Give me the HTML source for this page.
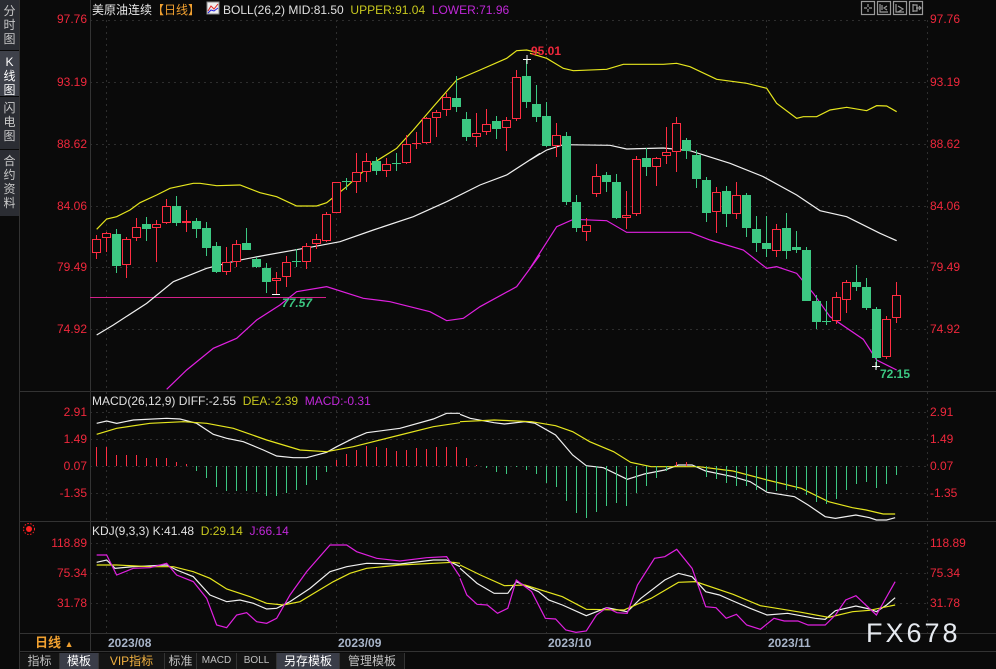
<!DOCTYPE html>
<html><head><meta charset="utf-8">
<style>
*{margin:0;padding:0;box-sizing:border-box}
body{width:996px;height:669px;background:#0a0a0a;overflow:hidden;position:relative;font-family:"Liberation Sans","Noto Sans CJK SC",sans-serif;}
.t{position:absolute;white-space:nowrap;font-size:12px;line-height:14px}
.ax{position:absolute;font-size:12px;line-height:14px;color:#f0283c;white-space:nowrap}
.side{position:absolute;left:0;width:19px;background:#2b2d33;color:#c8c8c8;font-size:12px;line-height:14px;text-align:center;padding-top:4px}
.tab{position:absolute;top:653px;height:16px;font-size:12px;line-height:16px;color:#c0c0c0;text-align:center;border-right:1px solid #333;background:#141414}
</style></head><body>
<svg width="996" height="669" style="position:absolute;left:0;top:0">
<g stroke="#2e2e2e" stroke-dasharray="2,4" stroke-width="1">
<line x1="90" y1="20.5" x2="927" y2="20.5"/><line x1="90" y1="82.5" x2="927" y2="82.5"/><line x1="90" y1="144.5" x2="927" y2="144.5"/><line x1="90" y1="206.5" x2="927" y2="206.5"/><line x1="90" y1="267.5" x2="927" y2="267.5"/><line x1="90" y1="329.5" x2="927" y2="329.5"/>
<line x1="90" y1="412.5" x2="927" y2="412.5"/><line x1="90" y1="439.5" x2="927" y2="439.5"/><line x1="90" y1="466.5" x2="927" y2="466.5"/><line x1="90" y1="493.5" x2="927" y2="493.5"/>
<line x1="90" y1="543.5" x2="927" y2="543.5"/><line x1="90" y1="573.5" x2="927" y2="573.5"/><line x1="90" y1="603.5" x2="927" y2="603.5"/>
<line x1="106.5" y1="20" x2="106.5" y2="633"/><line x1="336.5" y1="20" x2="336.5" y2="633"/><line x1="546.5" y1="20" x2="546.5" y2="633"/><line x1="766.5" y1="20" x2="766.5" y2="633"/><line x1="927.5" y1="20" x2="927.5" y2="633"/>
</g>
<g stroke="#333" stroke-width="1">
<line x1="20" y1="391.5" x2="996" y2="391.5"/><line x1="20" y1="521.5" x2="996" y2="521.5"/><line x1="20" y1="633.5" x2="996" y2="633.5"/><line x1="20" y1="651.5" x2="996" y2="651.5"/>
<line x1="90.5" y1="0" x2="90.5" y2="651"/><line x1="19.5" y1="0" x2="19.5" y2="669"/>
</g>
<line x1="90" y1="297.5" x2="326" y2="297.5" stroke="#d4208a" stroke-width="1"/>
<g fill="none" stroke-width="1.2" vector-effect="non-scaling-stroke">
<g transform="translate(80,20) scale(0.33333)">
<polyline stroke="#e6e61e" vector-effect="non-scaling-stroke" points="50,628 80,597 110,590 150,570 180,548 230,525 270,505 340,490 360,490 410,497 480,495 540,518 590,530 650,558 710,558 740,548 800,500 870,435 950,385 1000,330 1060,260 1130,180 1200,150 1280,115 1310,92 1340,90 1380,100"/>
<polyline stroke="#f0f0f0" vector-effect="non-scaling-stroke" points="50,945 100,915 200,850 280,785 380,745 470,722 560,705 700,680 780,665 880,630 1000,590 1100,545 1200,495 1280,465 1380,400"/>
<polyline stroke="#e020e0" vector-effect="non-scaling-stroke" points="260,1108 320,1050 400,985 470,955 530,900 600,855 650,815 740,800 850,835 930,845 1050,875 1100,902 1150,895 1200,860 1310,800 1380,705"/>
</g>
<g transform="translate(530,20) scale(0.33333)">
<polyline stroke="#e6e61e" vector-effect="non-scaling-stroke" points="0,100 50,115 100,145 130,152 230,148 280,133 400,133 440,130 480,140 560,178 650,190 710,205 740,250 800,295 820,290 860,290 900,270 950,262 1010,272 1040,257 1070,258 1100,275"/>
<polyline stroke="#f0f0f0" vector-effect="non-scaling-stroke" points="0,420 50,390 100,374 240,376 290,387 400,384 480,392 600,430 700,470 800,525 870,572 950,590 1050,640 1100,662"/>
<polyline stroke="#e020e0" vector-effect="non-scaling-stroke" points="0,745 80,620 130,598 230,602 290,637 480,637 540,660 640,690 710,745 740,740 800,760 850,820 900,890 1000,958 1040,1020 1100,1050"/>
</g>
<g transform="translate(0,385) scale(0.33333)">
<polyline stroke="#f0f0f0" vector-effect="non-scaling-stroke" points="290,115 320,108 350,115 400,105 500,100 540,102 590,115 640,148 680,160 730,170 790,195 830,213 880,218 920,218 980,202 1010,185 1060,160 1100,143 1200,130 1300,102 1340,85 1380,85"/>
<polyline stroke="#e6e61e" vector-effect="non-scaling-stroke" points="290,148 350,130 450,115 550,110 620,115 700,130 800,165 900,195 980,200 1060,185 1200,150 1300,125 1380,113"/>
<polyline stroke="#f0f0f0" vector-effect="non-scaling-stroke" points="290,532 320,525 345,550 400,545 500,540 530,555 580,575 630,630 680,650 720,645 760,655 800,672 830,670 870,650 930,610 990,560 1040,545 1100,535 1200,537 1300,525 1340,525 1380,545"/>
<polyline stroke="#e6e61e" vector-effect="non-scaling-stroke" points="290,540 350,540 450,545 520,545 580,560 630,580 680,612 750,635 800,655 850,660 900,650 950,620 1000,590 1050,565 1100,550 1200,540 1360,532 1380,535"/>
<polyline stroke="#e020e0" vector-effect="non-scaling-stroke" points="290,510 320,510 350,570 400,550 450,548 500,535 530,570 580,590 620,640 650,720 680,728 710,690 740,683 770,710 800,715 830,700 870,630 920,560 990,480 1040,480 1070,500 1130,520 1200,528 1280,518 1340,515 1380,575"/>
</g>
<g transform="translate(460,385) scale(0.3413,0.33333)">
<polyline stroke="#f0f0f0" vector-effect="non-scaling-stroke" points="0,88 30,100 100,113 130,117 190,110 220,115 280,150 330,210 370,242 420,248 490,283 540,267 600,255 640,240 680,240 720,258 800,275 850,290 900,322 980,335 1020,360 1070,395 1100,400 1160,390 1200,398 1220,405 1250,405 1275,398"/>
<polyline stroke="#e6e61e" vector-effect="non-scaling-stroke" points="0,110 100,105 210,110 280,122 330,140 380,170 450,200 500,232 560,245 700,245 800,258 900,285 1000,310 1080,350 1150,368 1190,375 1240,387 1275,387"/>
<polyline stroke="#f0f0f0" vector-effect="non-scaling-stroke" points="0,550 50,595 100,625 140,625 165,590 230,620 260,645 300,660 370,692 430,668 490,680 530,640 600,585 640,565 680,575 720,620 760,630 800,648 850,670 900,690 960,685 1040,700 1070,703 1100,677 1160,663 1200,672 1220,680 1250,660 1275,638"/>
<polyline stroke="#e6e61e" vector-effect="non-scaling-stroke" points="0,540 60,570 130,602 190,600 300,635 370,673 480,675 560,640 640,592 690,590 800,628 880,662 1000,682 1080,697 1150,680 1200,676 1275,660"/>
<polyline stroke="#e020e0" vector-effect="non-scaling-stroke" points="0,580 20,630 50,658 80,660 110,685 140,670 165,585 210,620 250,700 280,702 310,735 340,742 370,738 400,690 430,668 460,683 490,685 520,600 570,520 600,515 635,493 680,550 720,665 750,668 780,700 810,688 840,720 880,733 920,700 950,708 990,708 1020,720 1070,720 1100,690 1130,645 1160,632 1220,690 1275,590"/>
</g>
</g>
<g id="cd"></g>
<g id="hist"></g>
<g stroke="#fff" stroke-width="1"><line x1="523" y1="59.5" x2="531" y2="59.5"/><line x1="527" y1="55" x2="527" y2="64"/><line x1="272" y1="294.5" x2="280" y2="294.5"/><line x1="872" y1="366.5" x2="880" y2="366.5"/><line x1="876" y1="362" x2="876" y2="370"/></g>
<circle cx="29" cy="529" r="3" fill="#f22"/><circle cx="29" cy="529" r="5.5" fill="none" stroke="#f22" stroke-dasharray="1.5,1.5"/>
<g fill="none" stroke="#9a9a9a" stroke-width="1.2">
<rect x="861.5" y="1.5" width="13" height="13"/><rect x="877.5" y="1.5" width="13" height="13"/><rect x="893.5" y="1.5" width="13" height="13"/><rect x="909.5" y="1.5" width="13" height="13"/>
<path d="M868 4v3M868 9v3M864 8h3M869 8h3M880 4v8h8M882 5v5M887 6l-3 2 3 2M896 4v8h8M898 6l5 3-5 3M913 4v8M913 5h4v6h-4M916 8h5M919 6l2 2-2 2"/>
</g>
<rect x="207" y="2" width="12" height="12" fill="#eee" stroke="#888"/><path d="M208 11l3-5 3 3 4-5" stroke="#d22" fill="none"/><path d="M208 13l3-3 3 1 4-3" stroke="#22d" fill="none"/>
</svg>
<div class="side" style="top:0;height:50px">分<br>时<br>图</div>
<div class="side" style="top:51px;height:45px;background:#3e414a;color:#fff">K<br>线<br>图</div>
<div class="side" style="top:97px;height:52px">闪<br>电<br>图</div>
<div class="side" style="top:150px;height:66px">合<br>约<br>资<br>料</div>
<div class="t" style="left:92px;top:3px;color:#e8e8e8">美原油连续<span style="color:#f0a030">【日线】</span></div>
<div class="t" style="left:223px;top:3px;color:#e0e0e0">BOLL(26,2) MID:81.50 &nbsp;<span style="color:#c8c81e">UPPER:91.04</span> &nbsp;<span style="color:#c028d8">LOWER:71.96</span></div>
<div class="t" style="left:92px;top:394px;color:#e0e0e0">MACD(26,12,9) DIFF:-2.55 &nbsp;<span style="color:#c8c81e">DEA:-2.39</span> &nbsp;<span style="color:#c028d8">MACD:-0.31</span></div>
<div class="t" style="left:92px;top:524px;color:#e0e0e0">KDJ(9,3,3) K:41.48 &nbsp;<span style="color:#c8c81e">D:29.14</span> &nbsp;<span style="color:#c028d8">J:66.14</span></div>
<div class="t" style="left:531px;top:44px;color:#f0283c;font-weight:bold">95.01</div>
<div class="t" style="left:282px;top:296px;color:#3cc882;font-style:italic;font-weight:bold">77.57</div>
<div class="t" style="left:880px;top:367px;color:#3cc882;font-weight:bold">72.15</div>
<div class="ax" style="right:909px;top:12px">97.76</div><div class="ax" style="right:909px;top:75px">93.19</div><div class="ax" style="right:909px;top:137px">88.62</div><div class="ax" style="right:909px;top:199px">84.06</div><div class="ax" style="right:909px;top:260px">79.49</div><div class="ax" style="right:909px;top:322px">74.92</div>
<div class="ax" style="right:909px;top:405px">2.91</div><div class="ax" style="right:909px;top:432px">1.49</div><div class="ax" style="right:909px;top:459px">0.07</div><div class="ax" style="right:909px;top:486px">-1.35</div>
<div class="ax" style="right:909px;top:536px">118.89</div><div class="ax" style="right:909px;top:566px">75.34</div><div class="ax" style="right:909px;top:596px">31.78</div>
<div class="ax" style="left:930px;top:12px">97.76</div><div class="ax" style="left:930px;top:75px">93.19</div><div class="ax" style="left:930px;top:137px">88.62</div><div class="ax" style="left:930px;top:199px">84.06</div><div class="ax" style="left:930px;top:260px">79.49</div><div class="ax" style="left:930px;top:322px">74.92</div>
<div class="ax" style="left:930px;top:405px">2.91</div><div class="ax" style="left:930px;top:432px">1.49</div><div class="ax" style="left:930px;top:459px">0.07</div><div class="ax" style="left:930px;top:486px">-1.35</div>
<div class="ax" style="left:930px;top:536px">118.89</div><div class="ax" style="left:930px;top:566px">75.34</div><div class="ax" style="left:930px;top:596px">31.78</div>
<div class="t" style="left:35px;top:636px;color:#f0a030;font-weight:bold;font-size:13px">日线 <span style="font-size:9px">▲</span></div>
<div class="t" style="left:108px;top:636px;color:#a8b4c8;font-weight:bold">2023/08</div>
<div class="t" style="left:338px;top:636px;color:#a8b4c8;font-weight:bold">2023/09</div>
<div class="t" style="left:548px;top:636px;color:#a8b4c8;font-weight:bold">2023/10</div>
<div class="t" style="left:768px;top:636px;color:#a8b4c8;font-weight:bold">2023/11</div>
<div class="t" style="left:866px;top:618px;color:#e6eaf0;font-size:27px;line-height:30px;letter-spacing:3px">FX678</div>
<div class="tab" style="left:20px;width:40px">指标</div>
<div class="tab" style="left:60px;width:39px;background:#3a3d48;color:#fff">模板</div>
<div class="tab" style="left:99px;width:66px;color:#f0b040">VIP指标</div>
<div class="tab" style="left:165px;width:32px">标准</div>
<div class="tab" style="left:197px;width:40px;font-size:10px">MACD</div>
<div class="tab" style="left:237px;width:40px;font-size:10px">BOLL</div>
<div class="tab" style="left:277px;width:63px;background:#3a3d48;color:#fff">另存模板</div>
<div class="tab" style="left:340px;width:65px">管理模板</div>
<script>
var C=[["r",239,253,235,259],["r",233,238,232,252],["g",234,266,229,273],["r",239,265,237,278],["r",227,238,218,241],["g",224,229,217,241],["r",224,228,220,262],["r",206,223,199,224],["g",206,223,196,226],["r",221,223,210,232],["g",221,229,218,238],["g",228,248,222,256],["g",246,272,242,273],["r",262,272,247,275],["r",244,262,240,267],["g",243,250,228,250],["g",259,267,257,268],["g",268,282,263,293],["r",278,281,272,294],["r",262,277,256,287],["g",261,262,249,267],["r",246,262,243,269],["r",239,244,234,249],["r",214,241,212,242],["r",182,213,182,213],["g",181,182,178,190],["r",172,182,153,193],["r",161,172,153,182],["g",161,171,157,175],["r",164,171,158,177],["g",163,164,153,171],["r",144,163,135,164],["r",143,144,132,149],["r",118,143,117,144],["r",112,118,110,137],["r",97,110,93,116],["g",98,107,76,112],["g",119,137,112,141],["r",133,137,113,147],["r",124,132,109,135],["g",121,129,116,139],["r",120,128,117,151],["r",77,119,70,121],["g",76,102,59,108],["g",104,117,85,122],["g",116,146,102,147],["r",135,146,123,157],["g",136,202,132,205],["g",202,228,195,232],["r",225,232,218,241],["r",176,194,164,197],["g",175,182,172,192],["g",182,218,174,219],["r",215,218,191,229],["r",159,214,156,216],["g",158,167,148,176],["r",158,167,157,186],["r",152,156,127,164],["r",123,152,117,172],["g",140,151,138,159],["g",155,179,150,188],["g",180,213,177,222],["r",192,212,187,233],["g",191,214,186,227],["r",195,214,182,219],["g",195,228,193,237],["g",229,243,216,252],["g",243,249,216,257],["r",229,251,224,257],["g",228,251,213,259],["g",247,250,231,253],["g",250,301,247,301],["g",301,322,295,329],["g",321,322,301,325],["r",297,321,292,324],["r",282,300,280,313],["g",282,287,265,291],["g",287,308,278,310],["g",309,358,307,368],["r",319,357,316,359],["r",295,318,282,323]];
var H=[447,447,455,455,455,458,458,458,462,464,471,478,487,491,491,491,492,496,496,493,490,485,480,472,460,454,450,446,447,448,451,450,448,449,447,447,447,458,465,468,472,474,467,470,474,483,487,501,513,518,512,506,503,506,493,486,478,471,462,462,467,477,479,483,486,486,490,491,491,490,490,495,502,504,499,490,484,482,488,484,475];
var red="#ff2d42",grn="#3cc882",s="";
for(var i=0;i<C.length;i++){var c=C[i],x=96+10*i,col=c[0]=="r"?red:grn;
s+='<line x1="'+(x+.5)+'" y1="'+c[3]+'" x2="'+(x+.5)+'" y2="'+c[4]+'" stroke="'+col+'"/>';
var h=c[2]-c[1];
if(h<=1){s+='<line x1="'+(x-4)+'" y1="'+(c[1]+.5)+'" x2="'+(x+5)+'" y2="'+(c[1]+.5)+'" stroke="'+col+'"/>';}
else if(c[0]=="r"){s+='<rect x="'+(x-3.5)+'" y="'+(c[1]+.5)+'" width="8" height="'+(h-1)+'" fill="#0a0a0a" stroke="'+red+'"/>';}
else{s+='<rect x="'+(x-4)+'" y="'+c[1]+'" width="9" height="'+h+'" fill="'+grn+'"/>';}}
document.getElementById("cd").innerHTML=s;s="";
for(i=0;i<H.length;i++){var x=96+10*i+.5,y=H[i];s+='<line x1="'+x+'" y1="466" x2="'+x+'" y2="'+y+'" stroke="'+(y<466?red:grn)+'"/>';}
document.getElementById("hist").innerHTML=s;
</script>
</body></html>
